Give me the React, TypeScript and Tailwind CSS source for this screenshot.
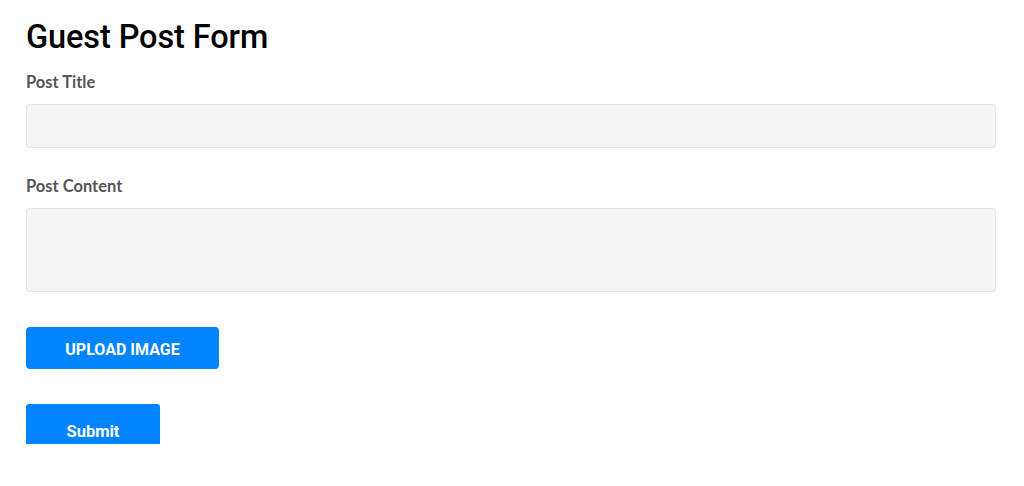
export default function App() {
  return (
    <main className="min-h-[486px] bg-white px-[26px] pt-[18px] font-['Lato',sans-serif]">
      <h1 className="font-['Roboto',sans-serif] text-[32.5px] font-medium leading-[38px] tracking-[-0.1px] text-black">
        Guest Post Form
      </h1>
      <form className="mt-[16px] w-[970px]">
        <label className="block text-[16.5px] font-bold leading-[20px] text-[#555]">Post Title</label>
        <input
          className="mt-[12px] block h-[44px] w-full rounded-[3px] border border-[#e6e6e6] bg-[#f4f4f4] outline-none"
          type="text"
        />
        <label className="mt-[28px] block text-[16.5px] font-bold leading-[20px] text-[#555]">Post Content</label>
        <textarea className="mt-[12px] block h-[84px] w-full resize-none rounded-[3px] border border-[#e6e6e6] bg-[#f4f4f4] outline-none" />
        <button
          className="mt-[35px] block h-[42px] w-[193px] rounded-[4px] bg-[#0084ff] pt-[4px] font-['Roboto',sans-serif] text-[16px] font-bold text-white"
          type="button"
        >
          UPLOAD IMAGE
        </button>
        <button
          className="mt-[35px] block h-[40px] w-[134px] rounded-t-[3px] bg-[#0084ff] pt-[16px] font-['Roboto',sans-serif] text-[16.5px] font-bold leading-[24px] text-white"
          type="submit"
        >
          Submit
        </button>
      </form>
    </main>
  );
}
